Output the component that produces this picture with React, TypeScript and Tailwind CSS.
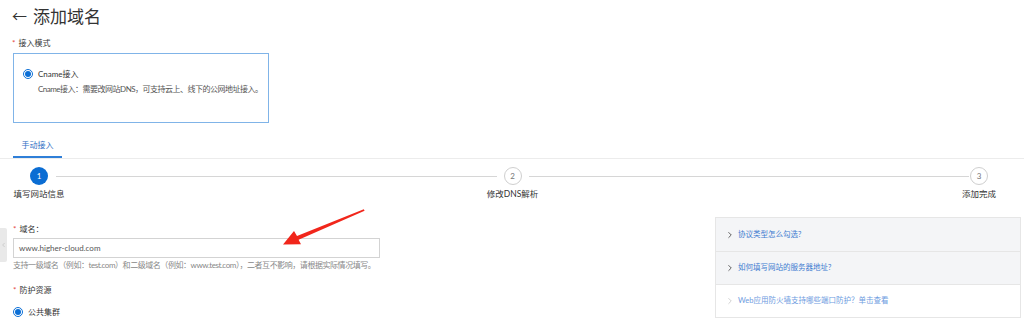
import { ChevronRight, ChevronLeft } from 'lucide-react';

const helpItems = [
  { text: '协议类型怎么勾选?', muted: false, bg: 'bg-[#f4f5f7]' },
  { text: '如何填写网站的服务器地址?', muted: false, bg: 'bg-[#f4f5f7]' },
  { text: 'Web应用防火墙支持哪些端口防护？单击查看', muted: true, bg: 'bg-white' },
];

function Radio() {
  return (
    <span className="flex h-[10px] w-[10px] items-center justify-center rounded-full border border-[#0b6fd6] bg-white">
      <span className="h-[6px] w-[6px] rounded-full bg-[#0b6fd6]" />
    </span>
  );
}

function Label({ text }: { text: string }) {
  return (
    <div className="flex items-center leading-[10px] text-[8px] text-[#333]">
      <span className="mr-[3px] text-[#e54545]">*</span>
      {text}
    </div>
  );
}

function StepCircle({ n, active }: { n: number; active?: boolean }) {
  return (
    <span
      className={`flex h-[18px] w-[18px] items-center justify-center rounded-full text-[8px] leading-none ${
        active ? 'bg-[#0b6dd3] text-white' : 'border border-[#cfcfcf] bg-white text-[#777]'
      }`}
    >
      {n}
    </span>
  );
}

export default function App() {
  return (
    <div className="relative h-[321px] w-[1024px] overflow-hidden bg-white font-['Lato','Noto_Sans_CJK_SC',sans-serif] text-[#333]">
      {/* 标题 */}
      <div className="flex h-[33px] items-center pl-[12px] font-['Noto_Sans','Noto_Sans_CJK_SC',sans-serif]">
        <span className="mr-[6px] text-[15px] leading-none text-[#333]">←</span>
        <span className="text-[17px] leading-none text-[#333]">添加域名</span>
      </div>

      {/* 接入模式 */}
      <div className="mt-[5px] pl-[12px]">
        <Label text="接入模式" />
        <div className="mt-[5px] ml-[1px] h-[70px] w-[256px] border border-[#80b4e8] pl-[9px] pt-[14px]">
          <div className="flex items-center gap-[5px] text-[8px] leading-[12px] text-[#333]">
            <Radio />
            Cname接入
          </div>
          <div className="mt-[3px] whitespace-nowrap pl-[15px] text-[8px] leading-[12px] tracking-[-0.5px] text-[#555]">
            Cname接入：需要改网站DNS，可支持云上、线下的公网地址接入。
          </div>
        </div>
      </div>

      {/* 手动接入 tab */}
      <div className="mt-[16px] border-b border-[#ececec]">
        <div className="ml-[13px] w-[49px] border-b-2 border-[#2f7fd8] pb-[5px] text-center text-[8px] leading-[12px] text-[#2f6fc4]">
          手动接入
        </div>
      </div>

      {/* 步骤 */}
      <div className="mt-[8px] flex pl-[13px] pr-[27px]">
        <div className="flex w-[52px] flex-col items-center">
          <StepCircle n={1} active />
          <span className="mt-[4px] whitespace-nowrap text-[8.5px] leading-[10px] text-[#333]">填写网站信息</span>
        </div>
        <div className="-ml-[9px] -mr-[10px] mt-[9px] h-px flex-1 bg-[#d6d6d6]" />
        <div className="flex w-[52px] flex-col items-center">
          <StepCircle n={2} />
          <span className="mt-[4px] whitespace-nowrap text-[8.5px] leading-[10px] text-[#333]">修改DNS解析</span>
        </div>
        <div className="-ml-[10px] -mr-[8px] mt-[9px] h-px flex-1 bg-[#d6d6d6]" />
        <div className="flex w-[36px] flex-col items-center">
          <StepCircle n={3} />
          <span className="mt-[4px] whitespace-nowrap text-[8.5px] leading-[10px] text-[#333]">添加完成</span>
        </div>
      </div>

      {/* 表单与帮助 */}
      <div className="flex justify-between">
        <div className="mt-[25px] w-[380px] pl-[13px]">
          <Label text="域名：" />
          <div className="mt-[4px] flex h-[20px] w-[367px] items-center border border-[#d3d3d3] px-[5px] text-[8px] text-[#555]">
            www.higher-cloud.com
          </div>
          <div className="mt-[2px] whitespace-nowrap text-[8px] leading-[10px] tracking-[-0.45px] text-[#888]">
            支持一级域名（例如：test.com）和二级域名（例如：www.test.com），二者互不影响，请根据实际情况填写。
          </div>
          <div className="mt-[15px]">
            <Label text="防护资源" />
          </div>
          <div className="mt-[11px] flex items-center gap-[5px] text-[8px] leading-[12px] text-[#333]">
            <Radio />
            公共集群
          </div>
        </div>

        <div className="mr-[3px] mt-[18px] w-[306px] border border-[#e6e6e6]">
          {helpItems.map((item, i) => (
            <div
              key={item.text}
              className={`flex h-[33px] items-center pl-[9px] ${item.bg} ${i > 0 ? 'border-t border-[#e6e6e6]' : ''}`}
            >
              <ChevronRight
                size={10}
                strokeWidth={2}
                className={item.muted ? 'text-[#c8c8c8]' : 'text-[#444]'}
              />
              <span className={`ml-[3px] text-[7.5px] ${item.muted ? 'text-[#6d9be0]' : 'text-[#3d7bd0]'}`}>
                {item.text}
              </span>
            </div>
          ))}
        </div>
      </div>

      {/* 左侧收起把手 */}
      <div className="absolute left-0 top-[228px] flex h-[34px] w-[7px] items-center justify-center rounded-r-[2px] bg-[#e9e9e9]">
        <ChevronLeft size={8} strokeWidth={1.5} className="text-[#aaa]" />
      </div>

      {/* 红色箭头标注 */}
      <svg className="absolute left-0 top-0" width="1024" height="321" viewBox="0 0 1024 321">
        <polygon
          points="283,244.5 301,244.3 298.6,239.8 364.6,210.7 363.8,209.2 297,236.1 294,231"
          fill="#f1261b"
        />
      </svg>
    </div>
  );
}
